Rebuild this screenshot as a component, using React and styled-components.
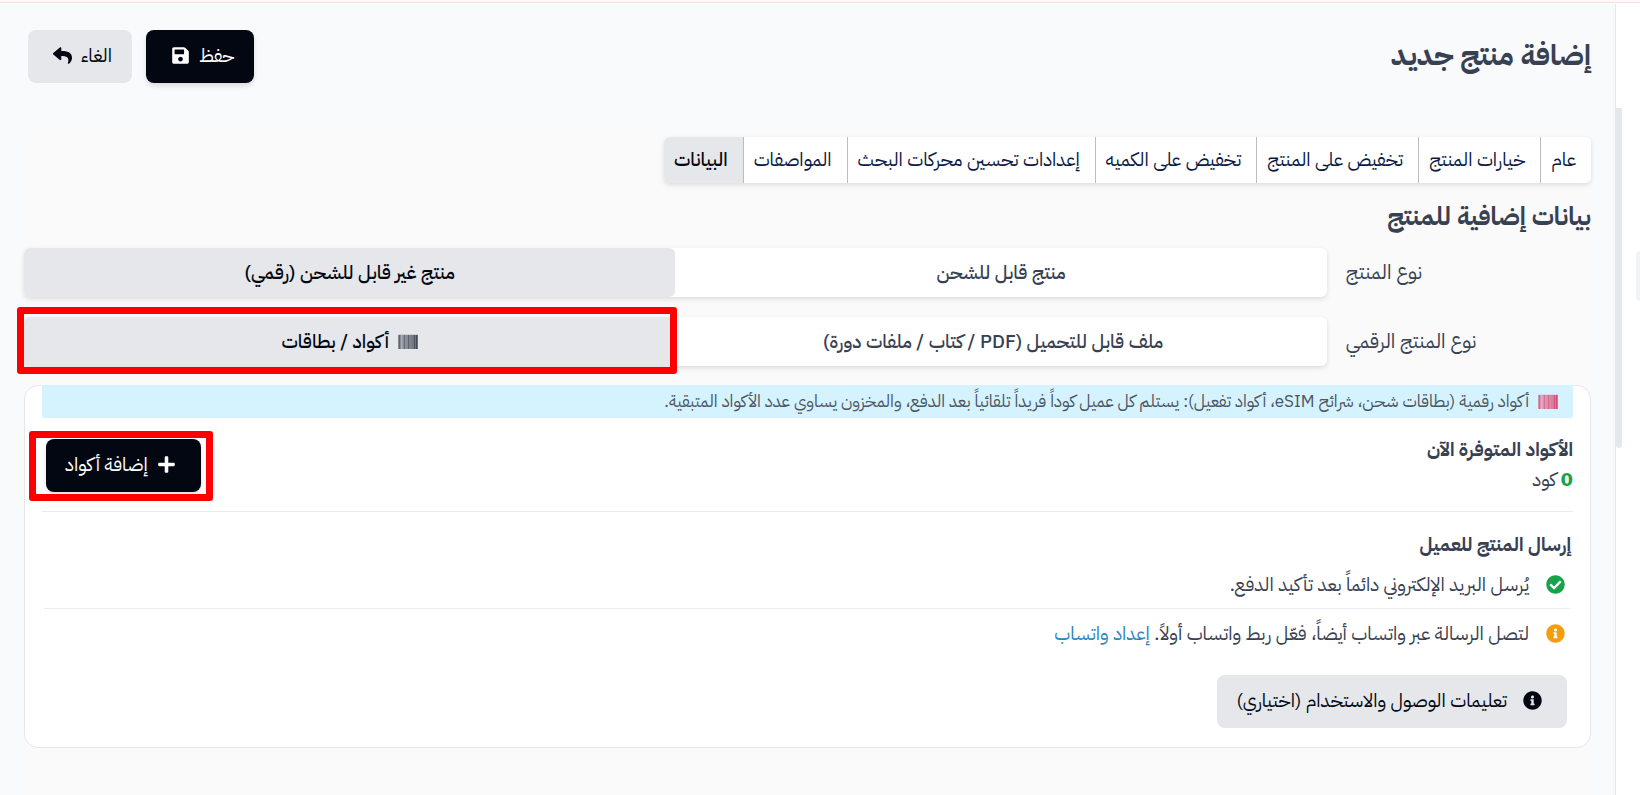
import React, { useState } from 'react';
import styled, { createGlobalStyle } from 'styled-components';
import { FaSave, FaReply, FaPlus, FaCheckCircle, FaInfoCircle } from 'react-icons/fa';

const GlobalStyle = createGlobalStyle`
  *, *::before, *::after { box-sizing: border-box; }
  body {
    margin: 0;
    background: #f9fafc;
    color: #374151;
    font-family: 'IBM Plex Sans Arabic', 'Noto Sans Arabic', 'DejaVu Sans', sans-serif;
    font-size: 19px;
    line-height: 27px;
  }
  button { font: inherit; color: inherit; border: 0; cursor: pointer; }
  h1, h2, h3, p { margin: 0; }
`;

const Shell = styled.div`
  display: flex;
  flex-direction: column;
  min-height: 100vh;
`;

const TopLine = styled.div`
  height: 4px;
  background: #fffafa;
  border-bottom: 1px solid #fff;
  box-shadow: inset 0 -1px 0 #fbdcdf;
`;

const Body = styled.div`
  display: flex;
  flex: 1;
`;

const SideNav = styled.aside`
  position: relative;
  flex: none;
  width: 25px;
  padding-top: 247px;
  background: #fff;
  border-left: 1px solid #e5e7eb;
`;

const SideItem = styled.div`
  width: 4px;
  height: 50px;
  background: #f3f4f6;
  border-top-left-radius: 4px;
  border-bottom-left-radius: 4px;
`;

const ScrollThumb = styled.div`
  position: absolute;
  top: 104px;
  left: 0;
  width: 6px;
  height: 340px;
  background: #e5e7eb;
  border-radius: 0 0 4px 4px;
`;

const Main = styled.main`
  flex: 1;
  min-width: 0;
  display: flex;
  flex-direction: column;
  padding: 26px 24px 0;
`;

const Header = styled.header`
  display: flex;
  justify-content: space-between;
  align-items: flex-start;
  margin-bottom: 54px;
  padding-left: 4px;
`;

const PageTitle = styled.h1`
  font-size: 29px;
  line-height: 52px;
  font-weight: 700;
`;

const Actions = styled.div`
  display: flex;
  gap: 14px;
`;

const Button = styled.button`
  display: inline-flex;
  align-items: center;
  gap: 9px;
  height: 53px;
  padding: ${p => (p.$iconFirst ? '0 25px 2px 19px' : '0 20px 2px 25px')};
  border-radius: 8px;
  background: ${p => (p.$dark ? '#030712' : '#e5e7eb')};
  color: ${p => (p.$dark ? '#fff' : '#030712')};
  box-shadow: ${p => (p.$dark ? '0 3px 5px rgba(0, 0, 0, 0.12)' : 'none')};
`;

const Panel = styled.section`
  flex: 1;
  background: #fafafa;
`;

const Tabs = styled.div`
  display: flex;
  width: fit-content;
  border-radius: 6px;
  background: #fff;
  box-shadow: 0 2px 5px rgba(0, 0, 0, 0.12);
  overflow: hidden;
`;

const Tab = styled.button`
  height: 46px;
  padding: 0 15px 2px 10px;
  white-space: nowrap;
  background: ${p => (p.$active ? '#e5e7eb' : '#fff')};
  color: ${p => (p.$active ? '#030712' : '#0a1a44')};
  font-weight: ${p => (p.$active ? 500 : 400)};
  & + & { border-right: 1px solid #bdbdbd; }
`;

const SectionTitle = styled.h2`
  font-size: 25px;
  line-height: 35px;
  font-weight: 700;
  padding: 16px 0 14px;
`;

const Field = styled.div`
  display: grid;
  grid-template-columns: 1fr 5fr;
  align-items: center;
  margin-bottom: 20px;
`;

const FieldLabel = styled.span`
  padding-left: 16px;
  font-size: 20px;
  text-align: left;
`;

const Segments = styled.div`
  display: grid;
  grid-template-columns: 1fr 1fr;
  margin-right: 3px;
  border-radius: 6px;
  background: #fff;
  box-shadow: 0 2px 5px rgba(0, 0, 0, 0.12);
`;

const Segment = styled.button`
  position: relative;
  display: flex;
  align-items: center;
  justify-content: center;
  gap: 9px;
  height: 49px;
  padding: ${p => (p.$indent ? '0 20px 0 4px' : '0 4px')};
  border-radius: 6px;
  background: ${p => (p.$active ? '#e5e7eb' : 'transparent')};
  color: ${p => (p.$active ? '#030712' : '#374151')};
  font-weight: 500;
`;

const Highlight = styled.span`
  position: absolute;
  inset: ${p => p.$inset};
  border: 7px solid #f00;
  border-radius: 3px;
  pointer-events: none;
`;

const Card = styled.div`
  background: #fff;
  border: 1px solid #e5e7eb;
  border-radius: 14px;
  padding: 0 17px 19px;
  margin-top: -1px;
`;

const Notice = styled.p`
  display: flex;
  align-items: center;
  gap: 9px;
  min-height: 33px;
  margin-top: -1px;
  padding: 0 15px;
  border-radius: 0 0 2px 2px;
  background: #d5f3fe;
  color: #4b5563;
  font-size: 17px;
`;

const Stock = styled.div`
  display: flex;
  align-items: center;
  justify-content: space-between;
  padding: 17px 0 16px;
  border-bottom: 1px solid #e9eaec;
`;

const Subtitle = styled.h3`
  font-size: 19px;
  line-height: 30px;
  font-weight: 700;
`;

const StockCount = styled.p`
  line-height: 30px;
`;

const Count = styled.strong`
  color: #16a34a;
  font-family: 'DejaVu Sans', sans-serif;
  font-size: 18px;
  font-weight: 700;
`;

const AddCodes = styled.div`
  position: relative;
  margin-left: 4px;
  height: 53px;
`;

const Delivery = styled.div`
  padding: 18px 2px 0;
`;

const Channel = styled.div`
  display: flex;
  align-items: center;
  gap: 17px;
  padding: 11px 6px 10px;
  & + & { border-top: 1px solid #ebeef3; }
`;

const StatusIcon = styled.span`
  display: flex;
  color: ${p => p.$color};
`;

const SetupLink = styled.a`
  color: #2d87bd;
  text-decoration: none;
`;

const Footer = styled.div`
  padding: 18px 4px 0 0;
`;

const InstructionsButton = styled(Button)`
  gap: 16px;
`;

const BarSvg = styled.svg`
  flex: none;
  display: block;
`;

const BARS = [0.4, 0.65, 0.4, 0.2, 0.3, 0.4, 0.6, 0.35, 0.4, 0.4, 0.65, 0.45, 0.45, 0.5, 0.5, 0.55, 0.75, 0.55, 0.8, 0.6];

function Barcode({ color }) {
  return (
    <BarSvg width="20" height="15" viewBox="0 0 20 15" aria-hidden="true" shapeRendering="crispEdges">
      <rect width="20" height="15" fill={color} opacity="0.12" />
      {BARS.map((o, i) => <rect key={i} x={i} y="1" width="1" height="14" fill={color} opacity={o} />)}
    </BarSvg>
  );
}

const TABS = ['عام', 'خيارات المنتج', 'تخفيض على المنتج', 'تخفيض على الكميه', 'إعدادات تحسين محركات البحث', 'المواصفات', 'البيانات'];

export default function App() {
  const [tab, setTab] = useState(6);
  const [shipping, setShipping] = useState('digital');
  const [kind, setKind] = useState('codes');
  return (
    <Shell dir="rtl" lang="ar">
      <GlobalStyle />
      <TopLine />
      <Body>
        <SideNav>
          <SideItem />
          <ScrollThumb />
        </SideNav>
        <Main>
          <Header>
            <PageTitle>إضافة منتج جديد</PageTitle>
            <Actions>
              <Button type="button" $dark>حفظ<FaSave size={19} /></Button>
              <Button type="button">الغاء<FaReply size={19} /></Button>
            </Actions>
          </Header>
          <Panel>
            <Tabs role="tablist">
              {TABS.map((t, i) => (
                <Tab key={t} type="button" role="tab" aria-selected={tab === i} $active={tab === i} onClick={() => setTab(i)}>{t}</Tab>
              ))}
            </Tabs>
            <SectionTitle>بيانات إضافية للمنتج</SectionTitle>
            <Field>
              <FieldLabel id="type-label">نوع المنتج</FieldLabel>
              <Segments role="group" aria-labelledby="type-label">
                <Segment type="button" aria-pressed={shipping === 'physical'} $active={shipping === 'physical'} onClick={() => setShipping('physical')}>منتج قابل للشحن</Segment>
                <Segment type="button" aria-pressed={shipping === 'digital'} $active={shipping === 'digital'} onClick={() => setShipping('digital')}>منتج غير قابل للشحن (رقمي)</Segment>
              </Segments>
            </Field>
            <Field>
              <FieldLabel id="kind-label">نوع المنتج الرقمي</FieldLabel>
              <Segments role="group" aria-labelledby="kind-label">
                <Segment type="button" $indent aria-pressed={kind === 'file'} $active={kind === 'file'} onClick={() => setKind('file')}>ملف قابل للتحميل (PDF / كتاب / ملفات دورة)</Segment>
                <Segment type="button" aria-pressed={kind === 'codes'} $active={kind === 'codes'} onClick={() => setKind('codes')}>
                  <Barcode color="#1f2937" />أكواد / بطاقات
                  <Highlight $inset="-10px -2px -8px -7px" />
                </Segment>
              </Segments>
            </Field>
            <Card>
              <Notice>
                <Barcode color="#dc2657" />
                <span>أكواد رقمية (بطاقات شحن، شرائح eSIM، أكواد تفعيل): يستلم كل عميل كوداً فريداً تلقائياً بعد الدفع، والمخزون يساوي عدد الأكواد المتبقية.</span>
              </Notice>
              <Stock>
                <div>
                  <Subtitle>الأكواد المتوفرة الآن</Subtitle>
                  <StockCount><Count>0</Count> كود</StockCount>
                </div>
                <AddCodes>
                  <Button type="button" $dark $iconFirst><FaPlus size={19} />إضافة أكواد</Button>
                  <Highlight $inset="-8px -12px -9px -17px" />
                </AddCodes>
              </Stock>
              <Delivery>
                <Subtitle>إرسال المنتج للعميل</Subtitle>
                <Channel>
                  <StatusIcon $color="#16a34a"><FaCheckCircle size={19} /></StatusIcon>
                  <p>يُرسل البريد الإلكتروني دائماً بعد تأكيد الدفع.</p>
                </Channel>
                <Channel>
                  <StatusIcon $color="#f59e0b"><FaInfoCircle size={19} /></StatusIcon>
                  <p>لتصل الرسالة عبر واتساب أيضاً، فعّل ربط واتساب أولاً. <SetupLink href="#whatsapp">إعداد واتساب</SetupLink></p>
                </Channel>
                <Footer>
                  <InstructionsButton type="button" $iconFirst><FaInfoCircle size={19} />تعليمات الوصول والاستخدام (اختياري)</InstructionsButton>
                </Footer>
              </Delivery>
            </Card>
          </Panel>
        </Main>
      </Body>
    </Shell>
  );
}
